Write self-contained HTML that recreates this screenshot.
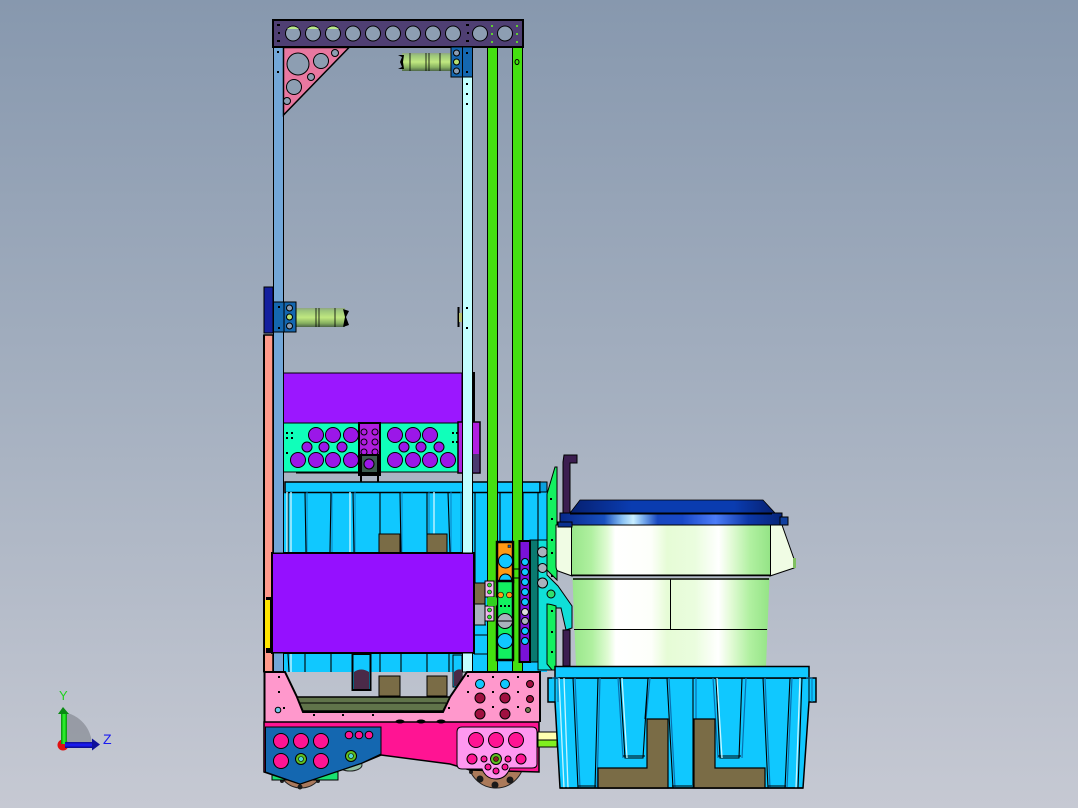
<!DOCTYPE html>
<html><head><meta charset="utf-8"><style>html,body{margin:0;padding:0;width:1078px;height:808px;overflow:hidden}svg{display:block}</style></head><body>
<svg xmlns="http://www.w3.org/2000/svg" width="1078" height="808" viewBox="0 0 1078 808">
<defs>
<linearGradient id="bg" x1="0" y1="0" x2="0" y2="1"><stop offset="0" stop-color="#8798ae"/><stop offset=".5" stop-color="#a5b0c0"/><stop offset="1" stop-color="#c6c9d3"/></linearGradient>
<linearGradient id="motor" x1="0" y1="0" x2="0" y2="1"><stop offset="0" stop-color="#8fa582"/><stop offset=".15" stop-color="#9dc77a"/><stop offset=".5" stop-color="#c0e880"/><stop offset=".8" stop-color="#86b060"/><stop offset="1" stop-color="#4d6648"/></linearGradient>
<linearGradient id="buck" x1="0" y1="0" x2="1" y2="0"><stop offset="0" stop-color="#98e68a"/><stop offset=".1" stop-color="#b0f0a0"/><stop offset=".18" stop-color="#e0fbd4"/><stop offset=".22" stop-color="#fff"/><stop offset=".4" stop-color="#fdfffa"/><stop offset=".48" stop-color="#e6fcd6"/><stop offset=".62" stop-color="#eafdde"/><stop offset=".74" stop-color="#fff"/><stop offset=".8" stop-color="#e4fbd8"/><stop offset=".9" stop-color="#b0f0a0"/><stop offset="1" stop-color="#94e486"/></linearGradient>
<linearGradient id="rim" x1="0" y1="0" x2="1" y2="0"><stop offset="0" stop-color="#07288a"/><stop offset=".2" stop-color="#1850c0"/><stop offset=".28" stop-color="#88c0f4"/><stop offset=".33" stop-color="#c8eeff"/><stop offset=".37" stop-color="#80b4f0"/><stop offset=".44" stop-color="#1848c0"/><stop offset=".55" stop-color="#1848c8"/><stop offset=".7" stop-color="#4c7cf8"/><stop offset=".85" stop-color="#0c38a8"/><stop offset="1" stop-color="#062478"/></linearGradient>
<linearGradient id="lid" x1="0" y1="0" x2="1" y2="0"><stop offset="0" stop-color="#062070"/><stop offset=".3" stop-color="#0a3cb0"/><stop offset=".8" stop-color="#0a3cb0"/><stop offset="1" stop-color="#062070"/></linearGradient>
<linearGradient id="ygr" x1="0" y1="0" x2="1" y2="0"><stop offset="0" stop-color="#0a8a10"/><stop offset=".5" stop-color="#30ff30"/><stop offset="1" stop-color="#0a9010"/></linearGradient>
<linearGradient id="zgr" x1="0" y1="0" x2="0" y2="1"><stop offset="0" stop-color="#101090"/><stop offset=".5" stop-color="#1c1cff"/><stop offset="1" stop-color="#0a0a80"/></linearGradient>
</defs>
<rect width="1078" height="808" fill="url(#bg)"/>

<!-- triad -->
<path d="M63 712A34 34 0 0 1 92 745H63Z" fill="#8f949d" opacity=".85"/>
<circle cx="63" cy="745" r="5.5" fill="#e01010"/>
<rect x="61" y="712" width="6" height="32" fill="url(#ygr)"/>
<path d="M63 707l6 7h-11z" fill="#0a8a14"/>
<rect x="65" y="742" width="28" height="6" fill="url(#zgr)"/>
<path d="M100 744.500l-8-6v12z" fill="#10109a"/>
<text x="59" y="700" font-family="Liberation Sans,sans-serif" font-size="13" fill="#20d020">Y</text>
<text x="103" y="744" font-family="Liberation Sans,sans-serif" font-size="14" fill="#1a1af0">Z</text>

<!-- wheels -->
<circle cx="301" cy="765" r="23" fill="#a8785c" stroke="#222"/>
<circle cx="496" cy="760" r="28" fill="#ab7a5a" stroke="#222"/>
<g fill="#1a1a1a"><circle cx="300" cy="787" r="2.500"/><circle cx="282" cy="781" r="2"/><circle cx="318" cy="781" r="2"/><circle cx="480" cy="779" r="3.500"/><circle cx="495" cy="785" r="3.500"/><circle cx="510" cy="780" r="3.500"/><circle cx="471" cy="772" r="2"/></g>
<rect x="272" y="772" width="66" height="8" fill="#18e070" stroke="#000"/>
<ellipse cx="350" cy="765" rx="12" ry="6" fill="#8fc0a0" stroke="#222"/>

<!-- bin 1 -->
<rect x="284" y="492" width="263" height="180" fill="#10c8ff"/>
<rect x="285" y="482" width="255" height="10.500" fill="#10c8ff" stroke="#000" stroke-width="1.500"/>
<rect x="540" y="482" width="7" height="10" fill="#0aa0e0" stroke="#000"/>
<g stroke="#000" stroke-width="1.100" fill="none">
<path d="M288 492V552M305 492L306 552M331 492L330 552M353 492L354 552M380 492V552M400 492L401 552M427 492V552M448 492L450 552M475 492V583M500 492V542M523 492V542M538 492V540"/>
<path d="M288 654L289 672M305 654V672M331 654V672M354 654V672M380 654V672M401 654V672M427 654V672M449 654V672"/>
<path d="M474 635H497M474 654H497M474 625H486"/>
</g>
<g stroke="#b8f0ff" stroke-width="1.500" fill="none"><path d="M291 492V552M291 654V672M350 492V552M434 492V552M287 492V552"/></g>
<g stroke="#0a7fc0" stroke-width="1" fill="none"><path d="M307 492V552M332 492V552M355 492V552M402 492V552M429 492V552M451 492V552M461 492V552"/></g>
<rect x="379" y="534" width="21" height="20" fill="#7a6c46" stroke="#000"/>
<rect x="427" y="534" width="20" height="20" fill="#7a6c46" stroke="#000"/>
<rect x="379" y="676" width="21" height="20" fill="#7a6c46" stroke="#000"/>
<rect x="427" y="676" width="20" height="20" fill="#7a6c46" stroke="#000"/>
<rect x="474" y="583" width="11" height="21" fill="#7a6c46" stroke="#000"/>
<rect x="474" y="604" width="11" height="21" fill="#a9b2bd" stroke="#000"/>
<rect x="352.500" y="654" width="18" height="36" fill="#10c8ff" stroke="#000" stroke-width="2"/>
<path d="M354 672Q361 667 369 672V689H354Z" fill="#4a2a48"/>
<rect x="453" y="655" width="9" height="32" fill="#10c8ff" stroke="#000"/>
<path d="M454 672Q458 668 462 670V686H454Z" fill="#4a2a48"/>

<!-- left strip salmon -->
<rect x="264" y="335" width="9" height="337" fill="#ff9a8a" stroke="#000" stroke-width="1.500"/>
<rect x="263" y="335" width="2" height="337" fill="#000"/>
<rect x="266" y="597" width="6" height="56" fill="#000"/>
<rect x="265" y="600" width="5" height="48" fill="#ffe400"/>
<rect x="264" y="287" width="9" height="46" fill="#14209e" stroke="#000"/>

<!-- purple upper -->
<rect x="283" y="373" width="179" height="50" fill="#9b17ff" stroke="#000"/>
<rect x="473" y="372" width="2" height="52" fill="#000"/>

<!-- plates -->
<rect x="283" y="423" width="76" height="49" fill="#10ffba" stroke="#000"/>
<rect x="380" y="423" width="78" height="49" fill="#10ffba" stroke="#000"/>
<rect x="296" y="472" width="62" height="1.500" fill="#000"/>
<g fill="#9b17e8" stroke="#000"><circle cx="316" cy="435" r="7.500"/><circle cx="333" cy="435" r="7.500"/><circle cx="351" cy="435" r="7.500"/><circle cx="307" cy="447" r="5"/><circle cx="324" cy="447" r="5"/><circle cx="342" cy="447" r="5"/><circle cx="298" cy="460" r="7.500"/><circle cx="316" cy="460" r="7.500"/><circle cx="333" cy="460" r="7.500"/><circle cx="351" cy="460" r="7.500"/><circle cx="395" cy="435" r="7.500"/><circle cx="413" cy="435" r="7.500"/><circle cx="430" cy="435" r="7.500"/><circle cx="404" cy="447" r="5"/><circle cx="421" cy="447" r="5"/><circle cx="439" cy="447" r="5"/><circle cx="395" cy="460" r="7.500"/><circle cx="413" cy="460" r="7.500"/><circle cx="430" cy="460" r="7.500"/><circle cx="448" cy="460" r="7.500"/></g>
<g fill="#000"><rect x="286" y="432" width="2" height="2"/><rect x="291" y="432" width="2" height="2"/><rect x="286" y="437" width="2" height="2"/><rect x="291" y="437" width="2" height="2"/><rect x="286" y="452" width="2" height="2"/><rect x="452" y="432" width="2" height="2"/><rect x="456" y="432" width="2" height="2"/><rect x="452" y="441" width="2" height="2"/><rect x="456" y="441" width="2" height="2"/></g>
<rect x="359" y="423" width="21" height="52" fill="#b01ee0" stroke="#000" stroke-width="2"/>
<g fill="#b01ee0" stroke="#000"><circle cx="364" cy="432" r="3"/><circle cx="375" cy="432" r="3"/><circle cx="364" cy="442" r="3"/><circle cx="375" cy="442" r="3"/><circle cx="364" cy="452" r="3"/><circle cx="375" cy="452" r="3"/></g>
<rect x="361" y="455" width="17" height="18" fill="#3d5d50" stroke="#000" stroke-width="2"/>
<circle cx="369" cy="464" r="5" fill="#9b17e8" stroke="#000"/>
<rect x="360" y="473" width="2" height="9" fill="#000"/><rect x="377" y="473" width="2" height="9" fill="#000"/>
<rect x="458" y="422" width="22" height="51" fill="#b01ee0" stroke="#000" stroke-width="1.500"/>
<rect x="473" y="454" width="6" height="18" fill="#4a3a70"/>

<!-- big purple -->
<rect x="272" y="553" width="202" height="100" fill="#9510ff" stroke="#000" stroke-width="2"/>

<!-- columns -->
<rect x="273.500" y="47" width="10" height="506" fill="#73a7d8" stroke="#000" stroke-width="1"/>
<rect x="273.500" y="653" width="10" height="19" fill="#73a7d8" stroke="#000" stroke-width="1"/>
<rect x="462.500" y="77" width="10" height="476" fill="#c2ffff" stroke="#000" stroke-width="1"/>
<rect x="462.500" y="653" width="10" height="19" fill="#c2ffff" stroke="#000" stroke-width="1"/>
<rect x="487.500" y="47" width="10" height="625" fill="#44e010" stroke="#000" stroke-width="1"/>
<rect x="512.500" y="47" width="10" height="625" fill="#44e010" stroke="#000" stroke-width="1"/>
<g fill="#000"><rect x="277" y="51" width="2" height="2"/><rect x="277" y="71" width="2" height="2"/><rect x="466" y="83" width="2" height="2"/><rect x="466" y="93" width="2" height="2"/><rect x="466" y="103" width="2" height="2"/><rect x="466" y="307" width="2" height="2"/><rect x="466" y="327" width="2" height="2"/></g>
<ellipse cx="517" cy="62" rx="2" ry="2.500" fill="none" stroke="#000"/>

<!-- top bar -->
<rect x="273" y="20" width="250" height="27" fill="#4f3f73" stroke="#000" stroke-width="2"/>
<g fill="#8d9eb2" stroke="#000"><circle cx="293" cy="33.500" r="7.500"/><circle cx="313" cy="33.500" r="7.500"/><circle cx="333" cy="33.500" r="7.500"/><circle cx="353" cy="33.500" r="7.500"/><circle cx="373" cy="33.500" r="7.500"/><circle cx="393" cy="33.500" r="7.500"/><circle cx="413" cy="33.500" r="7.500"/><circle cx="433" cy="33.500" r="7.500"/><circle cx="453" cy="33.500" r="7.500"/><circle cx="480" cy="33.500" r="7.500"/><circle cx="505" cy="33.500" r="7.500"/></g>
<g fill="#b8e88a"><path d="M287 29Q293 24 299 29Z"/><path d="M307 29Q313 24 319 29Z"/><path d="M327 29Q333 24 339 29Z"/></g>
<g fill="#000"><rect x="277" y="24" width="3" height="2"/><rect x="278" y="32" width="2" height="2"/><rect x="277" y="40" width="3" height="2"/><rect x="466" y="24" width="3" height="2"/><rect x="467" y="32" width="2" height="2"/><rect x="466" y="40" width="3" height="2"/></g>
<g fill="#60d030"><rect x="491" y="25" width="2" height="2"/><rect x="491" y="33" width="2" height="2"/><rect x="491" y="41" width="2" height="2"/><rect x="516" y="25" width="2" height="2"/><rect x="516" y="33" width="2" height="2"/><rect x="516" y="41" width="2" height="2"/></g>

<!-- gusset -->
<path d="M283.500 47.500H349L283.500 115Z" fill="#e878a0" stroke="#000" stroke-width="1.500"/>
<g fill="#8d9eb2" stroke="#000"><circle cx="298" cy="64" r="11"/><circle cx="321" cy="61" r="7.500"/><circle cx="335" cy="53" r="3.500"/><circle cx="311" cy="77" r="3.500"/><circle cx="294" cy="87" r="7.500"/><circle cx="287" cy="101" r="3.500"/></g>

<!-- top motor + bracket -->
<rect x="402" y="53" width="49" height="18" fill="url(#motor)"/>
<path d="M410 53V71M426 53V71M429 53V71M440 53V71" stroke="#000" stroke-width=".8" fill="none"/>
<path d="M398 55L402 57L400 62L402 67L398 69H404L403 62L404 55Z" fill="#000"/>
<rect x="451" y="47" width="11.500" height="30" fill="#1467b0" stroke="#000"/>
<rect x="462.500" y="47" width="10" height="30" fill="#1467b0" stroke="#000"/>
<g stroke="#000"><circle cx="456.500" cy="53" r="3" fill="#8d9eb2"/><circle cx="456.500" cy="62" r="3" fill="#b8e070"/><circle cx="456.500" cy="71" r="3" fill="#8d9eb2"/></g>
<rect x="466" y="52" width="2" height="2"/><rect x="466" y="71" width="2" height="2"/>

<!-- lower motor + bracket -->
<rect x="296" y="308" width="49" height="19" fill="url(#motor)"/>
<path d="M316 308V327M319 308V327M335 308V327" stroke="#000" stroke-width=".8" fill="none"/>
<path d="M343 309L349 311L346 317L349 325L343 327L345 317Z" fill="#000"/>
<rect x="273.500" y="302" width="11" height="30" fill="#1467b0" stroke="#000"/>
<rect x="284" y="302" width="12" height="30" fill="#1467b0" stroke="#000"/>
<g stroke="#000"><circle cx="289.500" cy="308" r="3" fill="#8d9eb2"/><circle cx="289.500" cy="317" r="3" fill="#b8e070"/><circle cx="289.500" cy="326" r="3" fill="#8d9eb2"/></g>
<rect x="278" y="306" width="2" height="2"/><rect x="278" y="327" width="2" height="2"/>
<rect x="457.500" y="307" width="2" height="20" fill="#000"/><rect x="459" y="313" width="3" height="9" fill="#b8c070"/>

<!-- lift carriage -->
<path d="M538 540H547V575L558 586L572 606V628L566 630L561 608H556L556 670H538Z" fill="#10e0d8" stroke="#000"/>
<rect x="530" y="540" width="8" height="122" fill="#0a7a70" stroke="#000"/>
<g fill="#a9b2bd" stroke="#000"><circle cx="542.500" cy="552" r="5"/><circle cx="542.500" cy="568" r="4.500"/><circle cx="542.500" cy="583" r="5"/></g>
<circle cx="551" cy="594" r="4" fill="#30e070" stroke="#000"/>
<path d="M564 455H577V463H570V525H563V462Z" fill="#3c1e50" stroke="#000"/>
<path d="M563 630H570V666H563Z" fill="#3c1e50" stroke="#000"/>
<path d="M547 494L555 467H557V580L547 570Z" fill="#14f060" stroke="#000"/>
<path d="M547 604Q550 604 556 606V670H552L547 664Z" fill="#14f060" stroke="#000"/>
<g fill="#000"><rect x="550" y="498" width="2" height="2"/><rect x="551" y="518" width="2" height="2"/><rect x="551" y="539" width="2" height="2"/><rect x="551" y="552" width="2" height="2"/><rect x="551" y="575" width="2" height="2"/><rect x="551" y="610" width="2" height="2"/><rect x="551" y="631" width="2" height="2"/><rect x="551" y="651" width="2" height="2"/></g>
<rect x="497" y="542" width="16" height="40" fill="#ff9a14" stroke="#000" stroke-width="2.500"/>
<circle cx="505.500" cy="561" r="7" fill="#10c8ff" stroke="#000"/>
<circle cx="505.500" cy="580" r="6" fill="#10c8ff" stroke="#000"/>
<rect x="508" y="545" width="2.500" height="2.500" fill="#1467b0" stroke="#000" stroke-width=".5"/>
<rect x="497" y="581" width="16" height="79" fill="#12f060" stroke="#000" stroke-width="2.500"/>
<circle cx="505" cy="621" r="7.500" fill="#a9b2bd" stroke="#000"/><path d="M498 621H512" stroke="#000"/>
<circle cx="505" cy="641" r="7.500" fill="#10c8ff" stroke="#000"/>
<circle cx="500.700" cy="595" r="2.800" fill="#ff9a14" stroke="#000" stroke-width=".6"/><circle cx="509.300" cy="595" r="2.800" fill="#ff9a14" stroke="#000" stroke-width=".6"/>
<g fill="#000"><rect x="500" y="605" width="2" height="2"/><rect x="504" y="605" width="2" height="2"/><rect x="508" y="605" width="2" height="2"/></g>
<rect x="519.500" y="541" width="10.500" height="121" fill="#7a12d8" stroke="#000" stroke-width="2"/>
<g fill="#10c8ff" stroke="#000"><circle cx="525" cy="562" r="3.500"/><circle cx="525" cy="572" r="3.500"/><circle cx="525" cy="582" r="3.500"/><circle cx="525" cy="592" r="3.500"/><circle cx="525" cy="602" r="3.500"/><circle cx="525" cy="612" r="3.500" fill="#ddd"/><circle cx="525" cy="621" r="3.500" fill="#a9b2bd"/><circle cx="525" cy="631" r="3.500"/><circle cx="525" cy="641" r="3.500"/></g>
<rect x="485" y="581" width="9" height="16" fill="#f0b8f0" stroke="#000"/><rect x="485" y="606" width="9" height="15" fill="#f0b8f0" stroke="#000"/>
<rect x="487" y="597" width="10" height="9" rx="2" fill="#30d020"/>
<g fill="#30e030" stroke="#000" stroke-width=".6"><circle cx="489.500" cy="585" r="2"/><circle cx="489.500" cy="592" r="2"/><circle cx="489.500" cy="610" r="2"/><circle cx="489.500" cy="617" r="2"/></g>
<path d="M513 569H519M513 578H519" stroke="#000" stroke-width="1"/>

<!-- base -->
<path d="M264 672H285L297 697L303 711H443L450 697L467 672H540V722H264Z" fill="#ff98cc"/>
<path d="M264.500 722V672H285L297 697L303 712H443L450 697L467 672H540V722" fill="none" stroke="#000" stroke-width="2"/>
<path d="M297 697H450L443 711H303Z" fill="#60744a" stroke="#000" stroke-width="1.500"/>
<path d="M300 703H446" stroke="#000"/>
<path d="M264 722H539V772L470 770L450 764L381 755L362 763L300 784L264 772Z" fill="#ff1493" stroke="#000" stroke-width="1.500"/>
<path d="M265.500 727H381V754L362 763L300 784L265.500 772Z" fill="#1467b0" stroke="#000" stroke-width="1"/>
<g fill="#ff1493" stroke="#000"><circle cx="281" cy="741" r="7.500"/><circle cx="301" cy="741" r="7.500"/><circle cx="321" cy="741" r="7.500"/><circle cx="281" cy="761" r="7.500"/><circle cx="321" cy="761" r="7.500"/><circle cx="349" cy="735" r="3.800"/><circle cx="359" cy="735" r="3.800"/><circle cx="369" cy="735" r="3.800"/></g>
<circle cx="301" cy="759" r="5.500" fill="#60c020" stroke="#000"/><circle cx="301" cy="759" r="2.500" fill="#50d8d0" stroke="#000" stroke-width=".6"/>
<circle cx="351" cy="756" r="5.500" fill="#60c020" stroke="#000"/><circle cx="351" cy="756" r="2.500" fill="#50d8d0" stroke="#000" stroke-width=".6"/>
<path d="M457 732Q457 727 462 727H532Q537 727 537 732V764Q537 768 532 768H510Q506 779 496 779Q486 779 482 769H462Q457 769 457 764Z" fill="#ff98f0" stroke="#000"/>
<g fill="#ff1493" stroke="#000"><circle cx="476" cy="740" r="7.500"/><circle cx="496" cy="740" r="7.500"/><circle cx="516" cy="740" r="7.500"/><circle cx="472" cy="759" r="5"/><circle cx="521" cy="759" r="5"/><circle cx="484" cy="759" r="3"/><circle cx="508" cy="759" r="3"/><circle cx="488" cy="767" r="3"/><circle cx="505" cy="767" r="3"/><circle cx="496" cy="771" r="3"/></g>
<circle cx="496" cy="759" r="5.500" fill="#60c020" stroke="#000"/><circle cx="496" cy="759" r="2.500" fill="#8a2020" stroke="#000" stroke-width=".6"/>
<g stroke="#000"><circle cx="480" cy="684" r="4.500" fill="#10c8ff"/><circle cx="505" cy="684" r="4.500" fill="#10c8ff"/><circle cx="530" cy="684" r="3.500" fill="#a01040"/><circle cx="480" cy="698" r="5" fill="#a01040"/><circle cx="505" cy="698" r="5" fill="#a01040"/><circle cx="530" cy="699" r="3.500" fill="#a01040"/><circle cx="480" cy="714" r="5" fill="#a01040"/><circle cx="505" cy="714" r="5" fill="#a01040"/><circle cx="528" cy="710" r="2.500" fill="#6f7c50"/></g>
<circle cx="278" cy="710" r="2.800" fill="#70c8e8" stroke="#000"/>
<g fill="#000"><ellipse cx="400" cy="721.500" rx="4.500" ry="2"/><ellipse cx="421" cy="721.500" rx="4.500" ry="2"/><ellipse cx="441" cy="721.500" rx="4.500" ry="2"/><rect x="313" y="714" width="2" height="2"/><rect x="342" y="714" width="2" height="2"/><rect x="372" y="714" width="2" height="2"/><rect x="283" y="707" width="2" height="2"/><rect x="448" y="707" width="2" height="2"/><rect x="278" y="676" width="2" height="2"/><rect x="278" y="691" width="2" height="2"/><rect x="467" y="675" width="2" height="2"/><rect x="467" y="691" width="2" height="2"/><rect x="492" y="691" width="2" height="2"/><rect x="492" y="706" width="2" height="2"/><rect x="517" y="676" width="2" height="2"/><rect x="517" y="691" width="2" height="2"/><rect x="517" y="706" width="2" height="2"/><rect x="492" y="676" width="2" height="2"/></g>
<rect x="538" y="732" width="19" height="8" fill="#ffffb0" stroke="#000"/>
<rect x="538" y="740" width="19" height="7" fill="#80f020" stroke="#000"/>

<!-- bucket -->
<path d="M556 525H572V576L558 571Q556 570 556 566Z" fill="#f0fce4" stroke="#000"/>
<path d="M770 525H782L794 559V568L770 576Z" fill="#f0fce4" stroke="#000"/>
<rect x="793" y="558" width="3" height="10" fill="#80c060"/>
<path d="M572.500 578H769.500L766 666H576Z" fill="url(#buck)"/>
<rect x="571.500" y="525" width="199" height="50" fill="url(#buck)" stroke="#000"/>
<path d="M572 575.500H770M573 579H769" stroke="#000" stroke-width="1.500"/>
<path d="M574 629.500H767M670.500 579V629.500" stroke="#000" fill="none"/>
<path d="M570 513L580 500H763L775 513Z" fill="url(#lid)" stroke="#000" stroke-width=".8"/>
<path d="M560 513H782V525H560Z" fill="url(#rim)" stroke="#000"/>
<path d="M570 514H772" stroke="#000"/>
<rect x="780" y="517" width="8" height="8" fill="#1040a0" stroke="#000"/>
<rect x="558" y="522" width="14" height="5" fill="#0a3090" stroke="#000"/>

<!-- tote -->
<path d="M548 678H816V702H809L803 788H560L555 702H548Z" fill="#10c8ff" stroke="#000" stroke-width="1.500"/>
<path d="M555 678H809" stroke="#000"/>
<path d="M555 702V678M809 702V678" stroke="#000"/>
<rect x="555" y="666.500" width="254" height="11.500" fill="#10c8ff" stroke="#000" stroke-width="1.500"/>
<g fill="none" stroke="#0a70b0" stroke-width="1.200"><path d="M575 678L580 788M600 678L597 788M618 678L623 758M650 678L646 719M669 678L675 788M696 678L696 788M713 678L718 758M746 678L742 758M765 678L770 788M792 678L787 788"/></g>
<g fill="none" stroke="#000" stroke-width="1.100">
<path d="M573 678L578 788M598 678L595 788M620 678L625 758H643L648 678M648 678L645 719M667 678L673 788M693 678L693 788M716 678L720 758H739L742 678M763 678L768 788M790 678L785 788M802 678L798 788"/>
<path d="M578 786H596M672 786H692M768 786H786M623 756H645M718 756H741"/>
</g>
<g fill="none" stroke="#c8f6ff" stroke-width="1.300"><path d="M559 678L564 788M564 678L568 788M622 678L627 758M717 678L722 758M800 678L796 788"/></g>
<path d="M598 788V768H647V719H668V788ZM694 788V719H715V768H765V788Z" fill="#7a6c46" stroke="#000" stroke-width="1.200"/>
<path d="M552 678H558V702M806 678H812V702" fill="none" stroke="#0a70b0"/>
<path d="M560 788H803" stroke="#000" stroke-width="1.500"/>
</svg>
</body></html>
